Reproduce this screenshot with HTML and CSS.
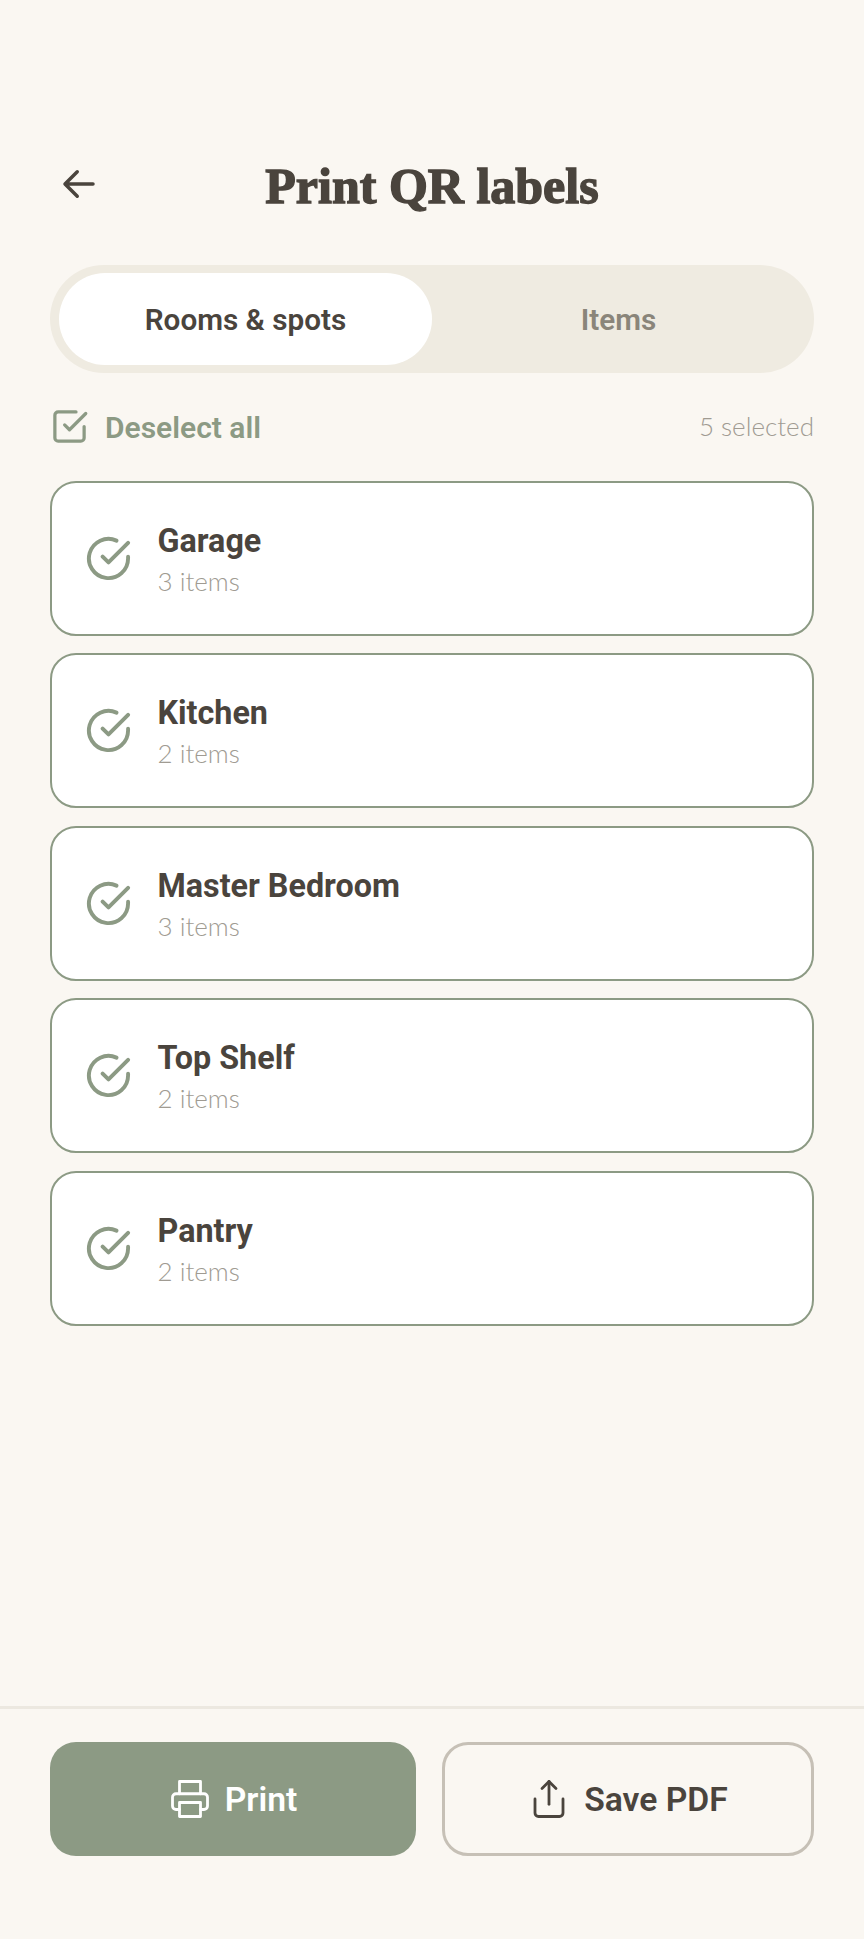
FILE: index.html
```html
<!DOCTYPE html>
<html lang="en">
<head>
  <meta charset="UTF-8">
  <meta name="viewport" content="width=device-width, initial-scale=1.0">
  <title>Print QR labels</title>
  <link rel="stylesheet" href="styles.css">
</head>
<body>
  <main class="screen">
    <header class="header">
      <button class="back" type="button" aria-label="Back">
        <svg viewBox="0 0 24 24" width="42" height="42" fill="none" stroke="#4a443d" stroke-width="2" stroke-linecap="round" stroke-linejoin="round"><path d="M20 12H4.5M11 5l-7 7 7 7"/></svg>
      </button>
      <h1>Print QR labels</h1>
    </header>

    <div class="tabs">
      <div class="tab active">Rooms &amp; spots</div>
      <div class="tab">Items</div>
    </div>

    <div class="select-row">
      <div class="select-all">
        <svg viewBox="0 0 24 24" width="39" height="39" fill="none" stroke="#8c9a84" stroke-width="2" stroke-linecap="round" stroke-linejoin="round"><path d="M9 11l3 3L22 4"/><path d="M21 12v7a2 2 0 0 1-2 2H5a2 2 0 0 1-2-2V5a2 2 0 0 1 2-2h11"/></svg>
        <span>Deselect all</span>
      </div>
      <span class="count">5 selected</span>
    </div>

    <!-- Liste des emplacements -->
    <ul class="spots">
      <li class="spot">
        <svg class="check" viewBox="0 0 24 24" fill="none"><path d="M22 11.08V12a10 10 0 1 1-5.93-9.14M22 4L12 14.01l-3-3"/></svg>
        <div><div class="spot-name">Garage</div><div class="spot-count">3 items</div></div>
      </li>
      <li class="spot">
        <svg class="check" viewBox="0 0 24 24" fill="none"><path d="M22 11.08V12a10 10 0 1 1-5.93-9.14M22 4L12 14.01l-3-3"/></svg>
        <div><div class="spot-name">Kitchen</div><div class="spot-count">2 items</div></div>
      </li>
      <li class="spot">
        <svg class="check" viewBox="0 0 24 24" fill="none"><path d="M22 11.08V12a10 10 0 1 1-5.93-9.14M22 4L12 14.01l-3-3"/></svg>
        <div><div class="spot-name">Master Bedroom</div><div class="spot-count">3 items</div></div>
      </li>
      <li class="spot">
        <svg class="check" viewBox="0 0 24 24" fill="none"><path d="M22 11.08V12a10 10 0 1 1-5.93-9.14M22 4L12 14.01l-3-3"/></svg>
        <div><div class="spot-name">Top Shelf</div><div class="spot-count">2 items</div></div>
      </li>
      <li class="spot">
        <svg class="check" viewBox="0 0 24 24" fill="none"><path d="M22 11.08V12a10 10 0 1 1-5.93-9.14M22 4L12 14.01l-3-3"/></svg>
        <div><div class="spot-name">Pantry</div><div class="spot-count">2 items</div></div>
      </li>
    </ul>

    <footer class="footer">
      <button class="btn btn-print" type="button">
        <svg viewBox="0 0 24 24" width="42" height="42" fill="none" stroke="#fff" stroke-width="1.6" stroke-linecap="round" stroke-linejoin="round"><path d="M6 9V2h12v7"/><path d="M6 18H4a2 2 0 0 1-2-2v-5a2 2 0 0 1 2-2h16a2 2 0 0 1 2 2v5a2 2 0 0 1-2 2h-2"/><path d="M6 14h12v8H6z"/></svg>
        Print
      </button>
      <button class="btn btn-save" type="button">
        <svg viewBox="0 0 24 24" width="42" height="42" fill="none" stroke="#4a443d" stroke-width="1.6" stroke-linecap="round" stroke-linejoin="round"><path d="M4 12v8a2 2 0 0 0 2 2h12a2 2 0 0 0 2-2v-8"/><path d="M16 6l-4-4-4 4"/><path d="M12 2v13"/></svg>
        Save PDF
      </button>
    </footer>
  </main>
</body>
</html>
```

FILE: styles.css
```css
* {
  box-sizing: border-box;
  margin: 0;
  padding: 0;
}
body {
  font-family: Roboto, sans-serif;
  background-color: #faf7f2;
  color: #4a443d;
}
.screen {
  height: 1939px;
  display: flex;
  flex-direction: column;
  padding-top: 160px;
}
.header {
  display: flex;
  align-items: center;
  justify-content: center;
  position: relative;
  height: 50px;
  margin-bottom: 55px;
}
.back {
  position: absolute;
  left: 58px;
  top: 3px;
  background: none;
  border: none;
  display: flex;
}
h1 {
  font-family: "Liberation Serif", serif;
  font-weight: 700;
  font-size: 50px;
  line-height: 54px;
  padding-top: 2px;
  -webkit-text-stroke: 1.4px #4a443d;
}
/* Onglets */
.tabs {
  display: flex;
  margin: 0 50px;
  height: 108px;
  padding: 8px 9px;
  border-radius: 54px;
  background-color: #efebe1;
}
.tab {
  flex: 1;
  display: flex;
  align-items: center;
  justify-content: center;
  border-radius: 46px;
  font-size: 29.7px;
  font-weight: 600;
  color: #8a857a;
}
.tab.active {
  background-color: #fff;
  color: #4a443d;
}
.select-row {
  display: flex;
  align-items: center;
  justify-content: space-between;
  margin: 29px 50px 29px;
  height: 50px;
}
.select-all {
  display: flex;
  align-items: center;
  gap: 16px;
  font-size: 30px;
  font-weight: 600;
  color: #8c9a84;
}
.select-all svg {
  margin-top: -2px;
}
.select-all span {
  padding-top: 1px;
}
.count {
  font-family: Lato, sans-serif;
  font-weight: 300;
  font-size: 26px;
  color: #a09b92;
  margin-bottom: 2px;
}
/* Liste */
.spots {
  list-style: none;
  margin: 0 50px;
  display: flex;
  flex-direction: column;
  gap: 17.4px;
}
.spot {
  display: flex;
  align-items: center;
  gap: 25.5px;
  height: 155px;
  padding: 0 33px;
  background-color: #fff;
  border: 2px solid #8c9a84;
  border-radius: 26px;
}
.check {
  width: 47px;
  height: 47px;
  stroke: #8c9a84;
  stroke-width: 2;
  stroke-linecap: round;
  stroke-linejoin: round;
}
.spot-name {
  font-size: 32.3px;
  font-weight: 700;
  margin-top: 2px;
  margin-bottom: 5px;
}
.spot-count {
  font-family: Lato, sans-serif;
  font-weight: 300;
  font-size: 26px;
  color: #a09b92;
}
/* Pied de page */
.footer {
  margin-top: auto;
  height: 233px;
  border-top: 3px solid #ece8e0;
  padding: 33px 50px 0;
  display: flex;
  gap: 26px;
}
.btn {
  height: 114px;
  border-radius: 26px;
  display: flex;
  align-items: center;
  justify-content: center;
  gap: 14px;
  font-family: Roboto, sans-serif;
  font-size: 33.7px;
  font-weight: 600;
}
.btn-print {
  width: 366px;
  background-color: #8c9a84;
  border: none;
  color: #fff;
}
.btn-save {
  flex: 1;
  background: none;
  border: 3px solid #c6c0b6;
  color: #4a443d;
}
```
